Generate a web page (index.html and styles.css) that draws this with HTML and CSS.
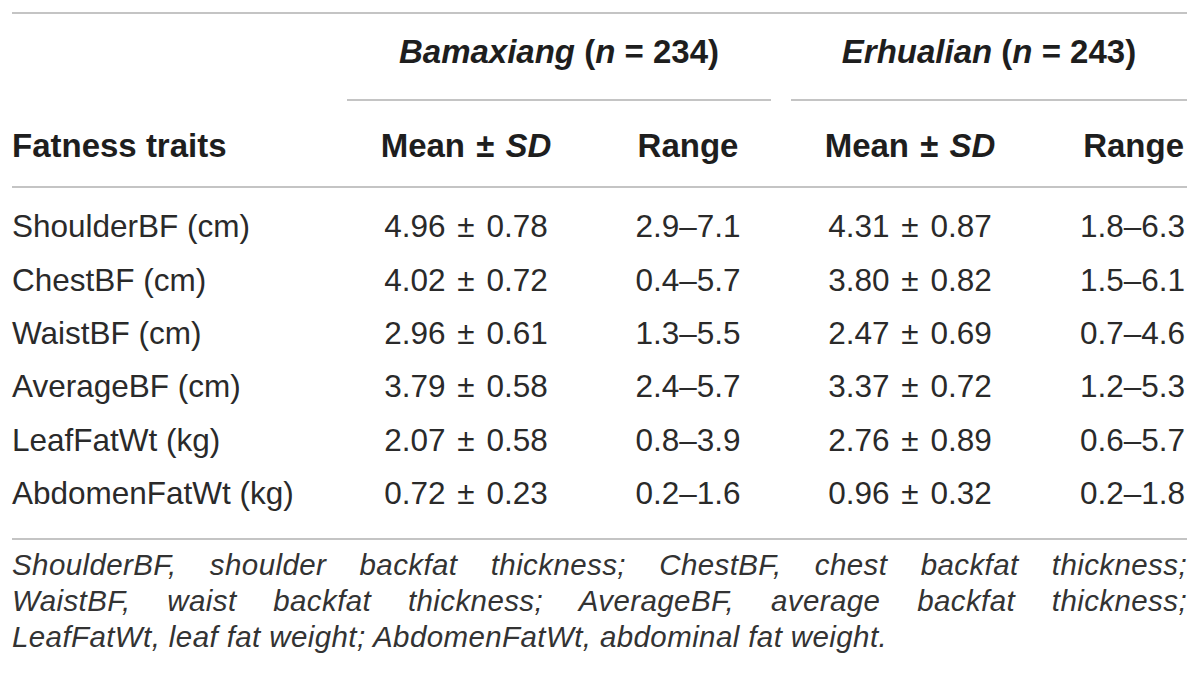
FILE: index.html
```html
<!DOCTYPE html>
<html lang="en">
<head>
<meta charset="utf-8">
<title>Fatness traits</title>
<link rel="stylesheet" href="styles.css">
</head>
<body>
<div class="table">
  <div class="grid group-row">
    <div class="cell"></div>
    <div class="group group-a"><i>Bamaxiang</i> (<i>n</i> = 234)</div>
    <div class="group group-b"><i>Erhualian</i> (<i>n</i> = 243)</div>
  </div>
  <div class="grid head-row">
    <div class="hcell left">Fatness traits</div>
    <div class="hcell">Mean <span class="pm">±</span> <i>SD</i></div>
    <div class="hcell">Range</div>
    <div class="hcell">Mean <span class="pm">±</span> <i>SD</i></div>
    <div class="hcell last">Range</div>
  </div>
  <div class="grid body-rows">
    <div class="dcell left">ShoulderBF (cm)</div><div class="dcell">4.96 <span class="pm">±</span> 0.78</div><div class="dcell">2.9–7.1</div><div class="dcell">4.31 <span class="pm">±</span> 0.87</div><div class="dcell last">1.8–6.3</div>
    <div class="dcell left">ChestBF (cm)</div><div class="dcell">4.02 <span class="pm">±</span> 0.72</div><div class="dcell">0.4–5.7</div><div class="dcell">3.80 <span class="pm">±</span> 0.82</div><div class="dcell last">1.5–6.1</div>
    <div class="dcell left">WaistBF (cm)</div><div class="dcell">2.96 <span class="pm">±</span> 0.61</div><div class="dcell">1.3–5.5</div><div class="dcell">2.47 <span class="pm">±</span> 0.69</div><div class="dcell last">0.7–4.6</div>
    <div class="dcell left">AverageBF (cm)</div><div class="dcell">3.79 <span class="pm">±</span> 0.58</div><div class="dcell">2.4–5.7</div><div class="dcell">3.37 <span class="pm">±</span> 0.72</div><div class="dcell last">1.2–5.3</div>
    <div class="dcell left">LeafFatWt (kg)</div><div class="dcell">2.07 <span class="pm">±</span> 0.58</div><div class="dcell">0.8–3.9</div><div class="dcell">2.76 <span class="pm">±</span> 0.89</div><div class="dcell last">0.6–5.7</div>
    <div class="dcell left">AbdomenFatWt (kg)</div><div class="dcell">0.72 <span class="pm">±</span> 0.23</div><div class="dcell">0.2–1.6</div><div class="dcell">0.96 <span class="pm">±</span> 0.32</div><div class="dcell last">0.2–1.8</div>
  </div>
  <p class="note">
    <span class="line full">ShoulderBF, shoulder backfat thickness; ChestBF, chest backfat thickness;</span>
    <span class="line full">WaistBF, waist backfat thickness; AverageBF, average backfat thickness;</span>
    <span class="line">LeafFatWt, leaf fat weight; AbdomenFatWt, abdominal fat weight.</span>
  </p>
</div>
</body>
</html>
```

FILE: styles.css
```css
html, body {
  margin: 0;
  padding: 0;
  background: #ffffff;
}

body {
  font-family: "Liberation Sans", Arial, sans-serif;
  color: #2a2a2a;
}

.table {
  width: 1175px;
  margin: 12px 0 0 12px;
  border-top: 2px solid #c4c4c4;
}

.grid {
  display: grid;
  grid-template-columns: 335px 238px 206px 238px 158px;
}

.group-row .group {
  font-size: 33px;
  font-weight: bold;
  line-height: 40px;
  color: #1e1e1e;
  text-align: center;
  padding: 17.5px 0 27.5px;
  border-bottom: 2px solid #c4c4c4;
}

.group-a {
  grid-column: 2 / 4;
  margin-right: 20px;
}

.group-b {
  grid-column: 4 / 6;
}

.head-row {
  border-bottom: 2px solid #c4c4c4;
}

.hcell {
  font-size: 33px;
  font-weight: bold;
  line-height: 40px;
  color: #1e1e1e;
  text-align: center;
  padding: 24.5px 0 20.5px;
}

.pm {
  margin: 0 2px;
}

.left {
  text-align: left;
}

.last {
  text-align: right;
  padding-right: 3px;
}

.body-rows {
  padding: 12.4px 0 17.9px;
  border-bottom: 2px solid #c4c4c4;
}

.dcell {
  font-size: 31.5px;
  line-height: 53.33px;
  text-align: center;
  white-space: nowrap;
}

.dcell .pm {
  margin: 0 3px;
}

.dcell.last {
  text-align: right;
  padding-right: 2px;
}

.dcell.left {
  text-align: left;
}

.note {
  margin: 0;
  padding-top: 7.2px;
  font-style: italic;
  font-size: 29.5px;
  line-height: 35.7px;
  letter-spacing: 0.4px;
  color: #333333;
}

.note .line {
  display: block;
  text-align: justify;
}

.note .line.full {
  text-align-last: justify;
}
```
